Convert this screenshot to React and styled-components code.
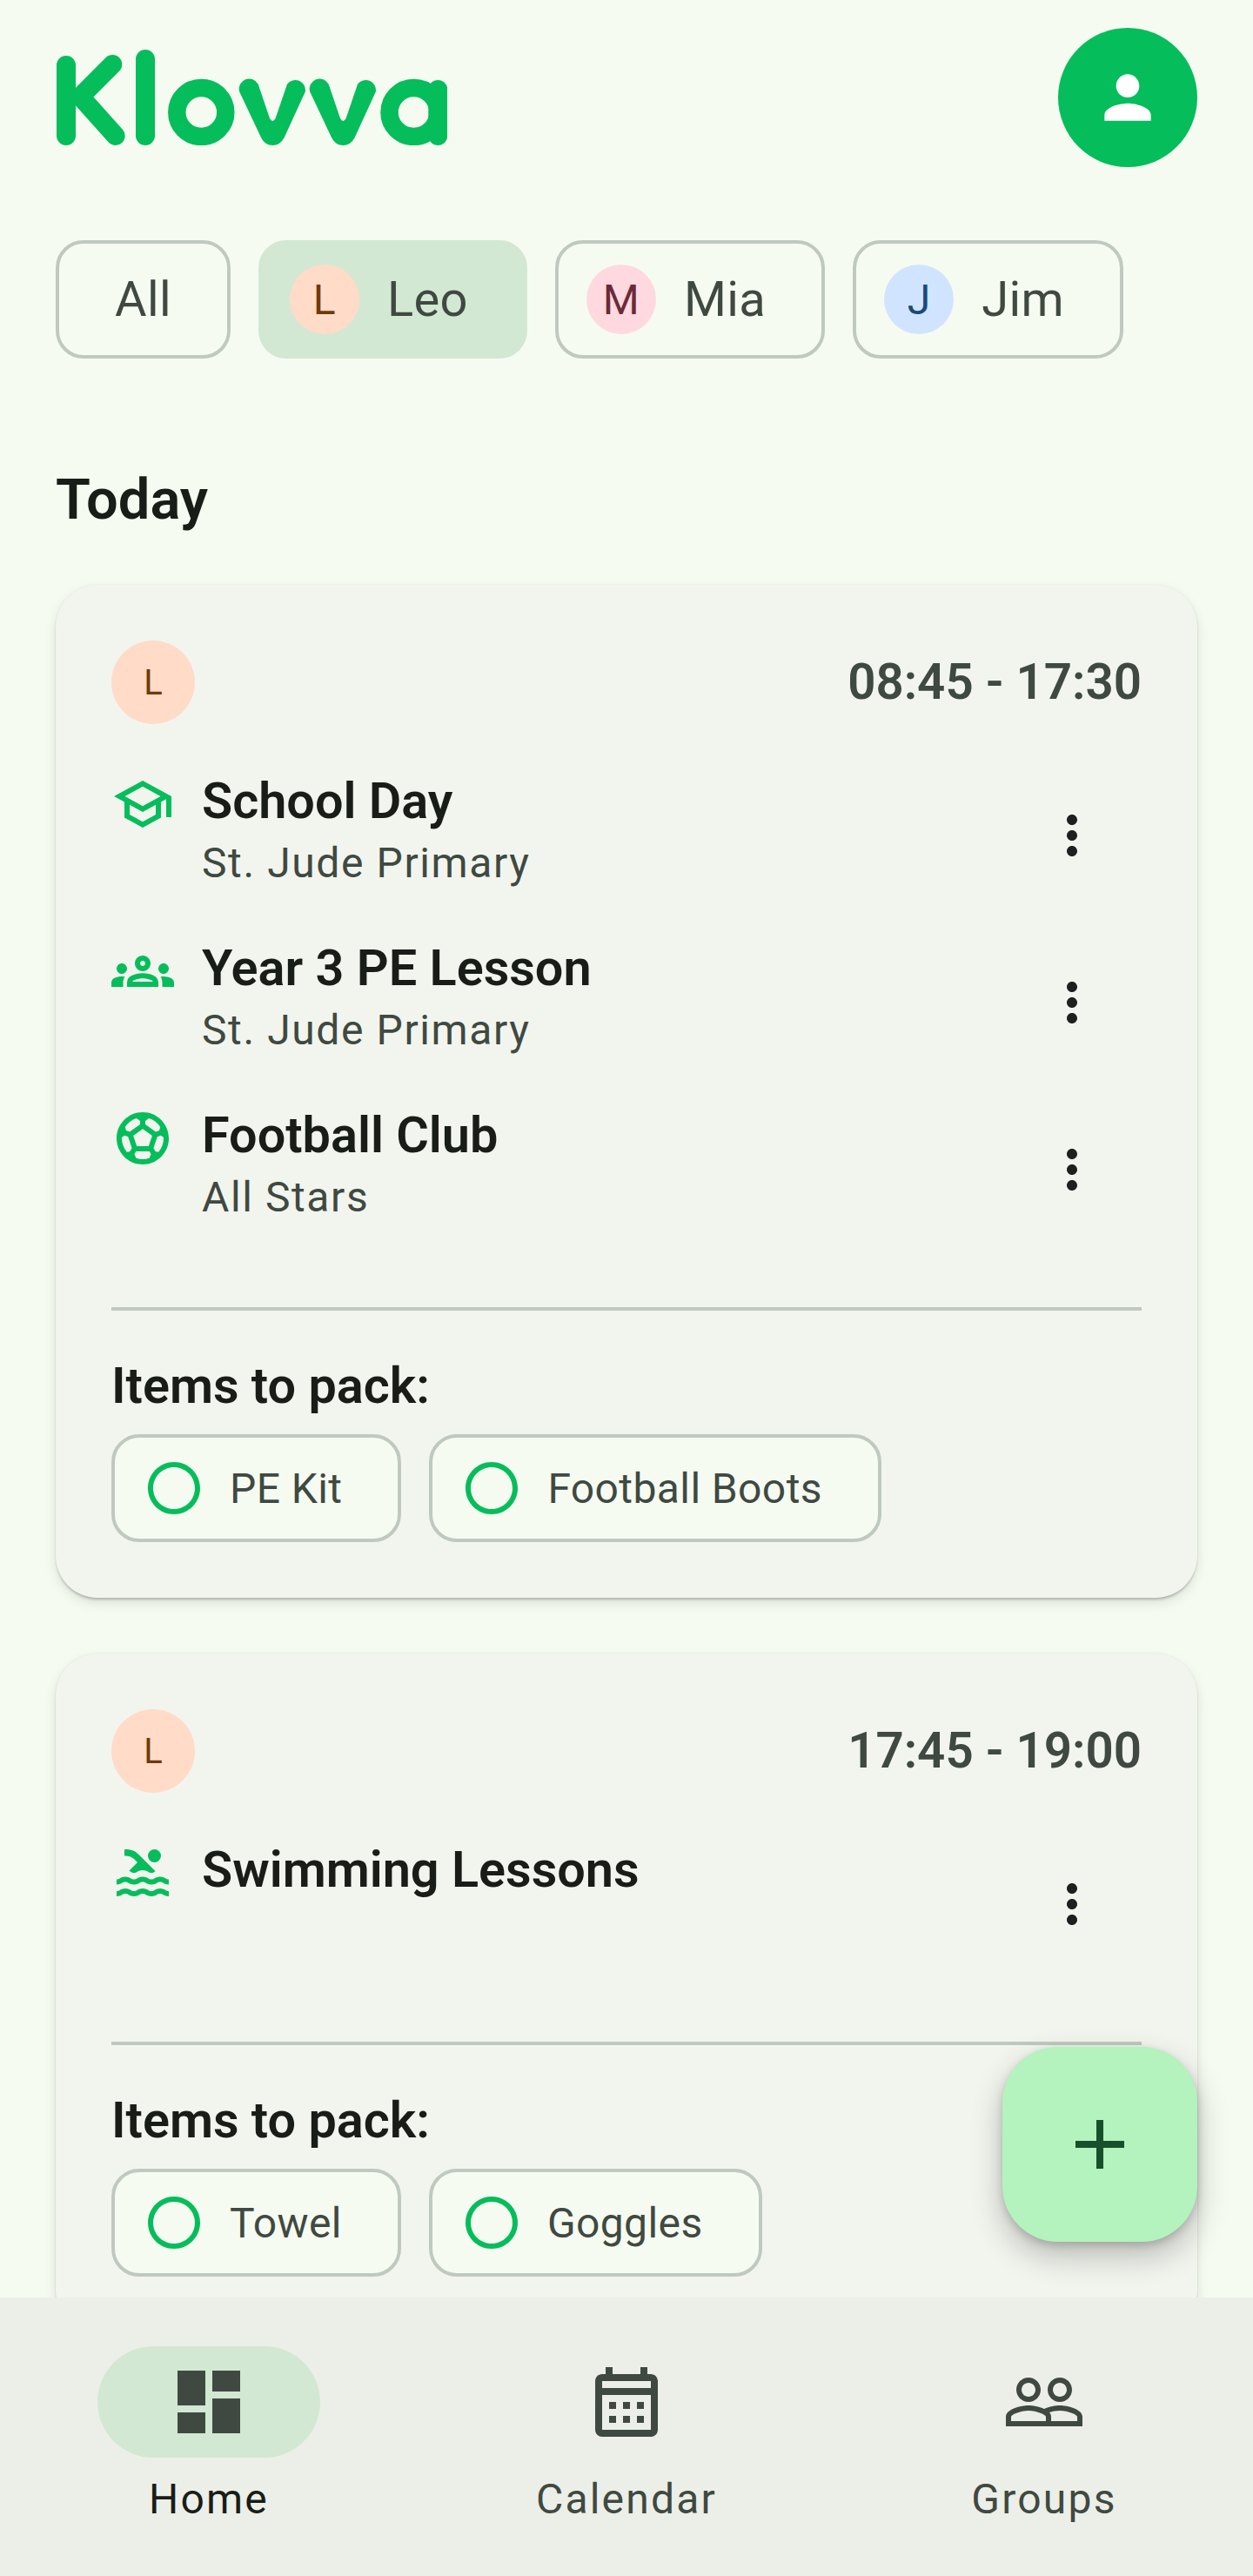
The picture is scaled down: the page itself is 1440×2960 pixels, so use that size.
import React from 'react';
import styled, { createGlobalStyle } from 'styled-components';
import {
  MdAdd,
  MdDashboard,
  MdMoreVert,
  MdOutlineCalendarMonth,
  MdOutlineGroups,
  MdOutlineSchool,
  MdOutlineSportsSoccer,
  MdPeopleOutline,
  MdPerson,
  MdPool,
  MdRadioButtonUnchecked,
} from 'react-icons/md';

const GREEN = '#05bd5b';
const DARK = '#191d17';
const MUTED = '#3f4941';
const LINE = '#bfc9c0';

const PEOPLE = {
  L: { bg: '#ffdbc8', fg: '#6f3a0a' },
  M: { bg: '#ffd9df', fg: '#6b2a38' },
  J: { bg: '#d1e4ff', fg: '#1a4a78' },
};

const GlobalStyle = createGlobalStyle`
  html, body {
    margin: 0;
    padding: 0;
    background: #f6fbf1;
  }
  * {
    box-sizing: border-box;
  }
`;

const App = () => (
  <Screen>
    <GlobalStyle />
    <Main>
      <Header>
        <Logo />
        <Profile>
          <MdPerson size={80} color="#fff" />
        </Profile>
      </Header>

      <Filters>
        <FilterChip>All</FilterChip>
        <FilterChip $active $withAvatar>
          <ChipAvatar $person="L">L</ChipAvatar>
          Leo
        </FilterChip>
        <FilterChip $withAvatar>
          <ChipAvatar $person="M">M</ChipAvatar>
          Mia
        </FilterChip>
        <FilterChip $withAvatar>
          <ChipAvatar $person="J">J</ChipAvatar>
          Jim
        </FilterChip>
      </Filters>

      <SectionTitle>Today</SectionTitle>

      <Cards>
        <Card
          time="08:45 - 17:30"
          activities={[
            { icon: MdOutlineSchool, title: 'School Day', place: 'St. Jude Primary' },
            { icon: MdOutlineGroups, title: 'Year 3 PE Lesson', place: 'St. Jude Primary' },
            { icon: MdOutlineSportsSoccer, title: 'Football Club', place: 'All Stars' },
          ]}
          items={['PE Kit', 'Football Boots']}
        />
        <Card
          time="17:45 - 19:00"
          activities={[{ icon: MdPool, title: 'Swimming Lessons' }]}
          items={['Towel', 'Goggles']}
        />
      </Cards>
    </Main>

    <Fab>
      <MdAdd size={96} color="#17502a" />
    </Fab>

    <BottomNav>
      <NavItem>
        <NavPill $active>
          <MdDashboard size={96} color={MUTED} />
        </NavPill>
        <NavLabel $active>Home</NavLabel>
      </NavItem>
      <NavItem>
        <NavPill>
          <MdOutlineCalendarMonth size={96} color={MUTED} />
        </NavPill>
        <NavLabel>Calendar</NavLabel>
      </NavItem>
      <NavItem>
        <NavPill>
          <MdPeopleOutline size={96} color={MUTED} />
        </NavPill>
        <NavLabel>Groups</NavLabel>
      </NavItem>
    </BottomNav>
  </Screen>
);

export default App;

// the v tapers toward its point, so it is a filled shape and not a stroke
const LOGO_V =
  'M211 48A11.700 11.700 0 0 1 232.700 39.700L246 79Q249.300 85 252.600 79L266 39.700A11.700 11.700 0 0 1 287 48L262.700 101Q258 110 249.300 110Q240.500 110 236 101Z';

const Logo = () => (
  <LogoMark viewBox="0 0 450 110" aria-label="Klovva">
    <g fill="none" stroke={GREEN} strokeWidth="22" strokeLinecap="round" strokeLinejoin="round">
      <path d="M12 18V99" />
      <path d="M65.300 17L28.400 54L68.700 99" />
      <path d="M103 11V99" />
      <circle cx="167.300" cy="72" r="28" strokeWidth="20.500" />
      <circle cx="411.500" cy="72" r="28" strokeWidth="20.500" />
      <path d="M439.300 46V99" />
    </g>
    <path d={LOGO_V} fill={GREEN} />
    <path d={LOGO_V} fill={GREEN} transform="translate(81 0)" />
  </LogoMark>
);

const Card = ({ time, activities, items }) => (
  <CardBox>
    <CardTop>
      <CardAvatar $person="L">L</CardAvatar>
      <Time>{time}</Time>
    </CardTop>
    {activities.map(({ icon: Icon, title, place }) => (
      <Activity key={title}>
        <ActivityIcon>
          <Icon size={72} color={GREEN} />
        </ActivityIcon>
        <ActivityText>
          <ActivityTitle>{title}</ActivityTitle>
          {place && <ActivityPlace>{place}</ActivityPlace>}
        </ActivityText>
        <MoreButton>
          <MdMoreVert size={72} color="#1f1f1f" />
        </MoreButton>
      </Activity>
    ))}
    <Divider />
    <PackTitle>Items to pack:</PackTitle>
    <PackList>
      {items.map((item) => (
        <PackChip key={item}>
          <MdRadioButtonUnchecked size={72} color={GREEN} />
          {item}
        </PackChip>
      ))}
    </PackList>
  </CardBox>
);

const Screen = styled.div`
  position: relative;
  width: 1440px;
  height: 2960px;
  display: flex;
  flex-direction: column;
  overflow: hidden;
  background: #f6fbf1;
  font-family: Roboto, sans-serif;
  color: ${DARK};
`;

const Main = styled.main`
  flex: 1;
  min-height: 0;
  overflow: hidden;
  padding: 32px 64px 0;
`;

const Header = styled.header`
  display: flex;
  align-items: center;
  justify-content: space-between;
`;

const LogoMark = styled.svg`
  width: 450px;
  height: 110px;
  display: block;
`;

const Profile = styled.div`
  width: 160px;
  height: 160px;
  border-radius: 50%;
  background: ${GREEN};
  display: flex;
  align-items: center;
  justify-content: center;
`;

const Filters = styled.div`
  display: flex;
  gap: 32px;
  margin-top: 84px;
`;

const FilterChip = styled.div`
  height: 136px;
  display: flex;
  align-items: center;
  gap: 32px;
  padding: 0 64px 0 ${(p) => (p.$withAvatar ? '32px' : '64px')};
  border-radius: 32px;
  border: 4px solid ${(p) => (p.$active ? '#d3e8d3' : LINE)};
  background: ${(p) => (p.$active ? '#d3e8d3' : 'transparent')};
  color: ${MUTED};
  font-size: 56px;
  letter-spacing: 0.4px;
`;

const ChipAvatar = styled.span`
  width: 80px;
  height: 80px;
  border-radius: 50%;
  display: flex;
  align-items: center;
  justify-content: center;
  background: ${(p) => PEOPLE[p.$person].bg};
  color: ${(p) => PEOPLE[p.$person].fg};
  font-size: 48px;
`;

const SectionTitle = styled.h2`
  margin: 118px 0 0;
  height: 88px;
  font-size: 65px;
  line-height: 88px;
  font-weight: 600;
`;

const Cards = styled.div`
  display: flex;
  flex-direction: column;
  gap: 64px;
  margin-top: 54px;
`;

const CardBox = styled.section`
  padding: 64px;
  border-radius: 48px;
  background: #f2f5ee;
  box-shadow: 0 3px 3px -1px rgba(0, 0, 0, 0.22), 0 6px 14px rgba(0, 0, 0, 0.1), 0 0 2px rgba(0, 0, 0, 0.08);
`;

const CardTop = styled.div`
  display: flex;
  align-items: center;
  justify-content: space-between;
  margin-bottom: 32px;
`;

const CardAvatar = styled.span`
  width: 96px;
  height: 96px;
  border-radius: 50%;
  display: flex;
  align-items: center;
  justify-content: center;
  background: ${(p) => PEOPLE[p.$person].bg};
  color: ${(p) => PEOPLE[p.$person].fg};
  font-size: 40px;
`;

const Time = styled.span`
  font-size: 56.500px;
  font-weight: 600;
  color: ${MUTED};
`;

const Activity = styled.div`
  height: 192px;
  display: flex;
  align-items: flex-start;
`;

const ActivityIcon = styled.div`
  width: 72px;
  height: 72px;
  margin-top: 24px;
  flex-shrink: 0;
  svg {
    display: block;
  }
`;

const ActivityText = styled.div`
  flex: 1;
  margin-left: 32px;
  padding-top: 17px;
`;

const ActivityTitle = styled.div`
  font-size: 57.600px;
  line-height: 80px;
  font-weight: 560;
`;

const ActivityPlace = styled.div`
  margin-top: 1px;
  font-size: 48px;
  line-height: 60px;
  letter-spacing: 1.6px;
  color: ${MUTED};
`;

const MoreButton = styled.div`
  width: 160px;
  height: 192px;
  display: flex;
  align-items: center;
  justify-content: center;
  flex-shrink: 0;
`;

const Divider = styled.hr`
  margin: 62px 0 0;
  border: 0;
  height: 4px;
  background: ${LINE};
`;

const PackTitle = styled.div`
  margin-top: 47px;
  font-size: 57.600px;
  line-height: 80px;
  font-weight: 560;
`;

const PackList = styled.div`
  display: flex;
  gap: 32px;
  margin-top: 15px;
`;

const PackChip = styled.div`
  height: 124px;
  display: flex;
  align-items: center;
  gap: 28px;
  padding: 0 64px 0 32px;
  border-radius: 32px;
  border: 4px solid ${LINE};
  background: #f6fbf1;
  color: ${MUTED};
  font-size: 48px;
  letter-spacing: 0.4px;
`;

const Fab = styled.button`
  position: absolute;
  right: 64px;
  top: 2352px;
  width: 224px;
  height: 224px;
  padding: 0;
  border: 0;
  border-radius: 64px;
  background: #b4f2be;
  display: flex;
  align-items: center;
  justify-content: center;
  box-shadow: 0 16px 36px rgba(0, 0, 0, 0.24), 0 4px 10px rgba(0, 0, 0, 0.16);
`;

const BottomNav = styled.nav`
  height: 320px;
  flex-shrink: 0;
  display: grid;
  grid-template-columns: repeat(3, 1fr);
  background: #ecefe8;
  position: relative;
`;

const NavItem = styled.div`
  display: flex;
  flex-direction: column;
  align-items: center;
  padding-top: 56px;
`;

const NavPill = styled.div`
  width: 256px;
  height: 128px;
  border-radius: 64px;
  display: flex;
  align-items: center;
  justify-content: center;
  background: ${(p) => (p.$active ? '#d3e8d3' : 'transparent')};
`;

const NavLabel = styled.div`
  margin-top: 18px;
  font-size: 48px;
  line-height: 60px;
  letter-spacing: 2.2px;
  font-weight: 400;
  color: ${(p) => (p.$active ? DARK : MUTED)};
`;
